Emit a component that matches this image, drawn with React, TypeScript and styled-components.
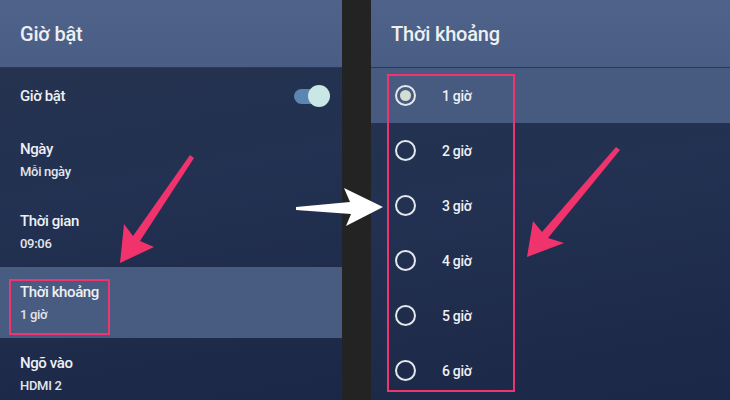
import * as React from 'react';
import styled, { createGlobalStyle } from 'styled-components';

const GlobalStyle = createGlobalStyle`
  html, body {
    margin: 0;
    padding: 0;
    background: #232323;
  }
  body {
    font-family: Roboto, "Noto Sans", "DejaVu Sans", sans-serif;
  }
`;

const Screen = styled.div`
  position: relative;
  display: flex;
  width: 730px;
  height: 400px;
  overflow: hidden;
  background: #232323;
`;

const Panel = styled.section<{ $width: number }>`
  display: flex;
  flex-direction: column;
  width: ${p => p.$width}px;
  flex-shrink: 0;
  overflow: hidden;
  background: linear-gradient(170deg, #26344f 0%, #233152 45%, #1b2746 100%);
`;

const Divider = styled.div`
  width: 29px;
  flex-shrink: 0;
  background: #232323;
`;

const Header = styled.header`
  height: 68px;
  flex-shrink: 0;
  display: flex;
  align-items: center;
  padding-left: 20px;
  background: linear-gradient(180deg, #4e628a 0%, #4a5e85 100%);
  border-bottom: 1px solid #2c3a5a;
  color: #eef0f3;
  font-size: 20px;
  font-weight: 500;
  letter-spacing: -0.2px;
  box-sizing: border-box;
`;

const List = styled.div`
  display: flex;
  flex-direction: column;
`;

const Row = styled.div<{ $height: number; $active?: boolean }>`
  height: ${p => p.$height}px;
  flex-shrink: 0;
  display: flex;
  align-items: center;
  padding: 0 12px 0 20px;
  box-sizing: border-box;
  background: ${p => (p.$active ? '#485b81' : 'transparent')};
`;

const TextBlock = styled.div`
  display: flex;
  flex-direction: column;
  gap: 6px;
  flex: 1;
`;

const Title = styled.div`
  color: #eef0f4;
  font-size: 15px;
  font-weight: 500;
  letter-spacing: -0.4px;
  line-height: 17px;
`;

const Sub = styled.div`
  color: #e2e6ec;
  font-size: 13px;
  font-weight: 500;
  letter-spacing: -0.3px;
  line-height: 15px;
`;

const Toggle = styled.div`
  position: relative;
  width: 36px;
  height: 22px;
  display: flex;
  align-items: center;
`;

const Track = styled.div`
  width: 28px;
  height: 15px;
  border-radius: 8px;
  background: #5b86b2;
`;

const Thumb = styled.div`
  position: absolute;
  right: 0;
  top: 0;
  width: 22px;
  height: 22px;
  border-radius: 50%;
  background: #c8e7e5;
`;

const OptionRow = styled.div<{ $active?: boolean }>`
  height: 55px;
  flex-shrink: 0;
  display: flex;
  align-items: center;
  padding-left: 24px;
  gap: 26px;
  box-sizing: border-box;
  background: ${p => (p.$active ? '#475a80' : 'transparent')};
`;

const Radio = styled.div<{ $checked?: boolean }>`
  width: 17px;
  height: 17px;
  border-radius: 50%;
  border: 2.5px solid #e3e8ee;
  display: flex;
  align-items: center;
  justify-content: center;

  &::after {
    content: '';
    display: ${p => (p.$checked ? 'block' : 'none')};
    width: 11px;
    height: 11px;
    border-radius: 50%;
    background: #d3ddd2;
  }
`;

const OptionLabel = styled.div`
  color: #eef0f4;
  font-size: 14px;
  font-weight: 500;
  letter-spacing: -0.3px;
`;

const Marker = styled.div<{ $x: number; $y: number; $w: number; $h: number }>`
  position: absolute;
  left: ${p => p.$x}px;
  top: ${p => p.$y}px;
  width: ${p => p.$w}px;
  height: ${p => p.$h}px;
  border: 2px solid #ef3470;
  box-sizing: border-box;
  pointer-events: none;
`;

const Arrows = styled.svg`
  position: absolute;
  left: 0;
  top: 0;
  pointer-events: none;
`;

const hours = ['1 giờ', '2 giờ', '3 giờ', '4 giờ', '5 giờ', '6 giờ'];

export default function App() {
  return (
    <>
      <GlobalStyle />
      <Screen>
        <Panel $width={342}>
          <Header>Giờ bật</Header>
          <List>
            <Row $height={56}>
              <TextBlock>
                <Title>Giờ bật</Title>
              </TextBlock>
              <Toggle>
                <Track />
                <Thumb />
              </Toggle>
            </Row>
            <Row $height={72}>
              <TextBlock>
                <Title>Ngày</Title>
                <Sub>Mỗi ngày</Sub>
              </TextBlock>
            </Row>
            <Row $height={71}>
              <TextBlock>
                <Title>Thời gian</Title>
                <Sub>09:06</Sub>
              </TextBlock>
            </Row>
            <Row $height={71} $active>
              <TextBlock>
                <Title>Thời khoảng</Title>
                <Sub>1 giờ</Sub>
              </TextBlock>
            </Row>
            <Row $height={72}>
              <TextBlock>
                <Title>Ngõ vào</Title>
                <Sub>HDMI 2</Sub>
              </TextBlock>
            </Row>
          </List>
        </Panel>
        <Divider />
        <Panel $width={359}>
          <Header>Thời khoảng</Header>
          <List>
            {hours.map((h, i) => (
              <OptionRow key={h} $active={i === 0}>
                <Radio $checked={i === 0} />
                <OptionLabel>{h}</OptionLabel>
              </OptionRow>
            ))}
          </List>
        </Panel>

        <Marker $x={9} $y={279} $w={101} $h={56} />
        <Marker $x={387} $y={74} $w={128} $h={318} />

        <Arrows width="730" height="400" viewBox="0 0 730 400">
          <polygon
            fill="#f0336c"
            points="190,155 194,158 140,241 154,247 120,263 124,224 133,236"
          />
          <polygon
            fill="#f0336c"
            points="616,147 620,150 548,238 564,243 527,257 533,221 542,232"
          />
          <polygon
            fill="#ffffff"
            points="296,207 350,202 344,188 383,207 346,226 351,214 296,210"
          />
        </Arrows>
      </Screen>
    </>
  );
}
